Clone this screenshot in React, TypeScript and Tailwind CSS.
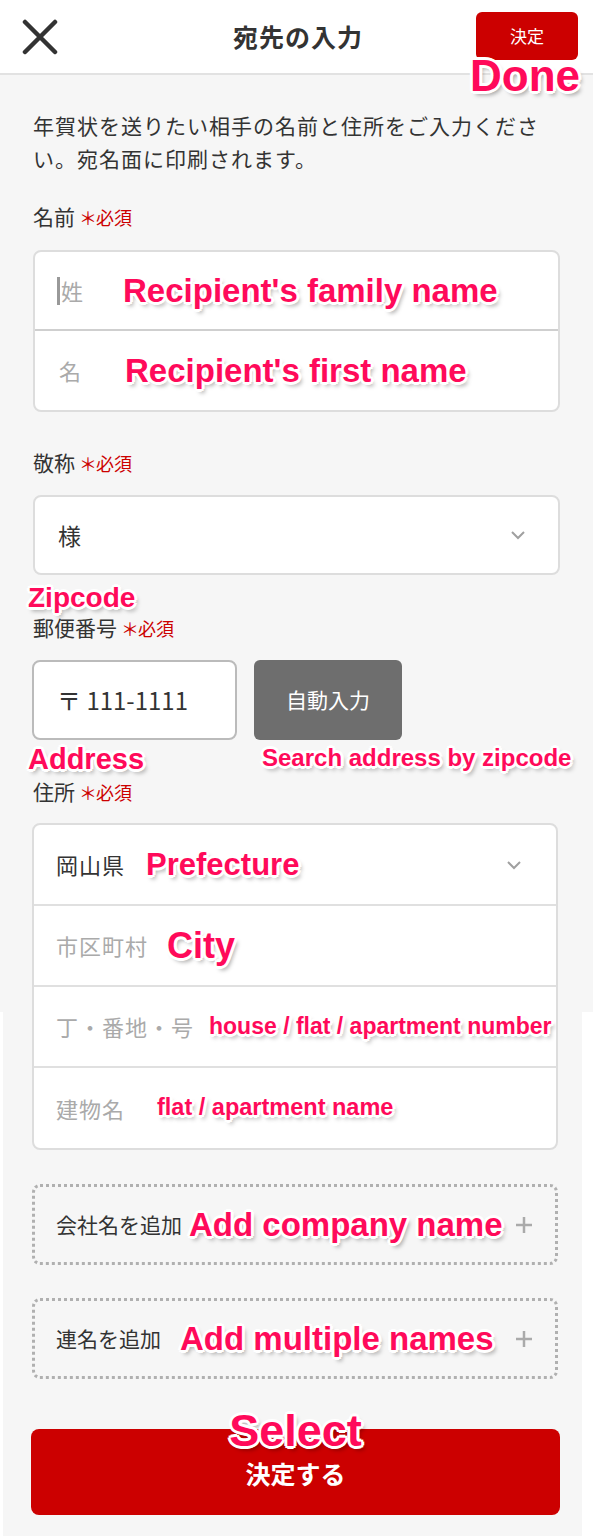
import { useState, type ReactNode } from "react";

// annotation labels drawn on top of the screenshot
const note =
  "shrink-0 whitespace-nowrap font-['Liberation_Sans',Arial,sans-serif] font-bold leading-none tracking-normal text-[#ff0a5a] [text-shadow:-2px_-2px_0_#fff,2px_-2px_0_#fff,-2px_2px_0_#fff,2px_2px_0_#fff,0_3px_0_#fff,0_-3px_0_#fff,3px_0_0_#fff,-3px_0_0_#fff,3px_4px_4px_rgba(0,0,0,0.35)]";

const Label = ({ children }: { children: ReactNode }) => (
  <div className="flex h-[26px] items-center text-[21px]">
    {children}
    <span className="ml-[4px] -mr-[1px] text-[18px] leading-none text-[#cc0000]">＊</span>
    <span className="text-[18px] leading-none text-[#cc0000]">必須</span>
  </div>
);

const Chevron = () => (
  <svg width="16" height="10" viewBox="0 0 16 10" fill="none">
    <path d="M2 2l6 6 6-6" stroke="#a0a0a0" strokeWidth="2" />
  </svg>
);

const Plus = () => (
  <svg width="18" height="18" viewBox="0 0 18 18">
    <path d="M9 1v16M1 9h16" stroke="#aaaaaa" strokeWidth="2.5" />
  </svg>
);

type RowProps = { text: string; muted?: boolean; last?: boolean; chevron?: boolean; children?: ReactNode };

const Row = ({ text, muted, last, chevron, children }: RowProps) => (
  <div
    className={`flex items-center pr-[34px] pl-[22px] text-[22px] tracking-[1px] ${
      muted ? "text-[#aaaaaa]" : "text-[#333333]"
    } ${last ? "h-[80px]" : "h-[81px] border-b-2 border-[#e0e0e0]"}`}
  >
    <span className="shrink-0 whitespace-nowrap">{text}</span>
    {children}
    <span className="flex-1" />
    {chevron && <Chevron />}
  </div>
);

const AddBox = ({ text, children }: { text: string; children: ReactNode }) => (
  <div className="-ml-[1px] flex h-[81px] w-[526px] items-center rounded-[8px] border-[3px] border-dotted border-[#b0b0b0] pr-[22px] pl-[21px] text-[21px]">
    <span className="shrink-0">{text}</span>
    {children}
    <span className="flex-1" />
    <Plus />
  </div>
);

export default function App() {
  const [zip] = useState("111-1111");

  return (
    <div className="relative min-h-[1536px] w-full bg-[#f6f6f6] font-['Noto_Sans_CJK_JP','Noto_Sans',sans-serif] text-[#333333]">
      <header className="flex h-[75px] items-center justify-between border-b-2 border-[#e2e2e2] bg-white pr-[15px] pl-[22px]">
        <svg width="36" height="36" viewBox="0 0 36 36">
          <path d="M3 3l30 30M33 3L3 33" stroke="#333333" strokeWidth="4.5" strokeLinecap="round" />
        </svg>
        <h1 className="pl-[62px] text-[25px] font-bold tracking-[1px]">宛先の入力</h1>
        <div className="relative mb-[2px]">
          <button className="h-[48px] w-[102px] rounded-[6px] bg-[#cc0000] text-[17px] text-white">決定</button>
          <span className={`${note} absolute top-[42px] -left-[6px] z-10 text-[44px]`}>Done</span>
        </div>
      </header>

      <main className="flex flex-col px-[33px]">
        <p className="pt-[34px] text-[21px] leading-[33px] tracking-[1px]">
          年賀状を送りたい相手の名前と住所をご入力ください。宛名面に印刷されます。
        </p>

        <div className="mt-[29px]">
          <Label>名前</Label>
        </div>
        <div className="mt-[20px] overflow-hidden rounded-[8px] border-2 border-[#dddddd] bg-white">
          <div className="flex h-[79px] items-center border-b-2 border-[#cfcfcf] pl-[22px] text-[22px] text-[#aaaaaa]">
            <span className="mr-[1px] h-[28px] w-[3px] bg-[#999999]" />
            <span>姓</span>
            <span className={`${note} ml-[40px] text-[33px]`}>Recipient's family name</span>
          </div>
          <div className="flex h-[79px] items-center pl-[24px] text-[22px] text-[#aaaaaa]">
            <span>名</span>
            <span className={`${note} ml-[44px] text-[33px]`}>Recipient's first name</span>
          </div>
        </div>

        <div className="mt-[38px]">
          <Label>敬称</Label>
        </div>
        <div className="mt-[19px] flex h-[80px] items-center justify-between rounded-[8px] border-2 border-[#dddddd] bg-white pr-[32px] pl-[23px] text-[23px]">
          <span>様</span>
          <Chevron />
        </div>

        <div className="relative mt-[40px]">
          <span className={`${note} absolute -top-[31px] -left-[5px] text-[28px]`}>Zipcode</span>
          <Label>郵便番号</Label>
        </div>
        <div className="relative mt-[19px] flex gap-[17px]">
          <div className="-ml-[1px] flex h-[80px] w-[205px] items-center rounded-[8px] border-2 border-[#bbbbbb] bg-white pl-[23px] text-[24px]">
            〒 {zip}
          </div>
          <button className="h-[80px] w-[148px] rounded-[6px] bg-[#6e6e6e] text-[21px] text-white">自動入力</button>
          <span className={`${note} absolute top-[86px] left-[229px] text-[24px]`}>Search address by zipcode</span>
        </div>

        <div className="relative mt-[39px]">
          <span className={`${note} absolute -top-[34px] -left-[5px] text-[29px]`}>Address</span>
          <Label>住所</Label>
        </div>
        <div className="mt-[18px] -ml-[1px] w-[526px] overflow-hidden rounded-[8px] border-2 border-[#dddddd] bg-white">
          <Row text="岡山県" chevron>
            <span className={`${note} ml-[21px] text-[31px]`}>Prefecture</span>
          </Row>
          <Row text="市区町村" muted>
            <span className={`${note} ml-[19px] text-[36px]`}>City</span>
          </Row>
          <Row text="丁・番地・号" muted>
            <span className={`${note} ml-[15px] text-[23px]`}>house / flat / apartment number</span>
          </Row>
          <Row text="建物名" muted last>
            <span className={`${note} ml-[32px] text-[23.5px]`}>flat / apartment name</span>
          </Row>
        </div>

        <div className="mt-[34px]">
          <AddBox text="会社名を追加">
            <span className={`${note} ml-[7px] text-[33px]`}>Add company name</span>
          </AddBox>
        </div>
        <div className="mt-[33px]">
          <AddBox text="連名を追加">
            <span className={`${note} ml-[19px] text-[33px]`}>Add multiple names</span>
          </AddBox>
        </div>

        <div className="relative mt-[50px] -ml-[2px] w-[529px]">
          <span className={`${note} absolute -top-[21px] left-1/2 z-10 -translate-x-1/2 text-[45px]`}>Select</span>
          <button className="h-[86px] w-full rounded-[8px] bg-[#cc0000] pt-[4px] text-[25px] font-bold text-white">
            決定する
          </button>
        </div>
      </main>

      {/* stitched screenshot edges */}
      <div className="pointer-events-none absolute top-[1012px] bottom-0 left-0 w-[3px] bg-white" />
      <div className="pointer-events-none absolute top-[1012px] right-0 bottom-0 w-[11px] bg-white" />
    </div>
  );
}
